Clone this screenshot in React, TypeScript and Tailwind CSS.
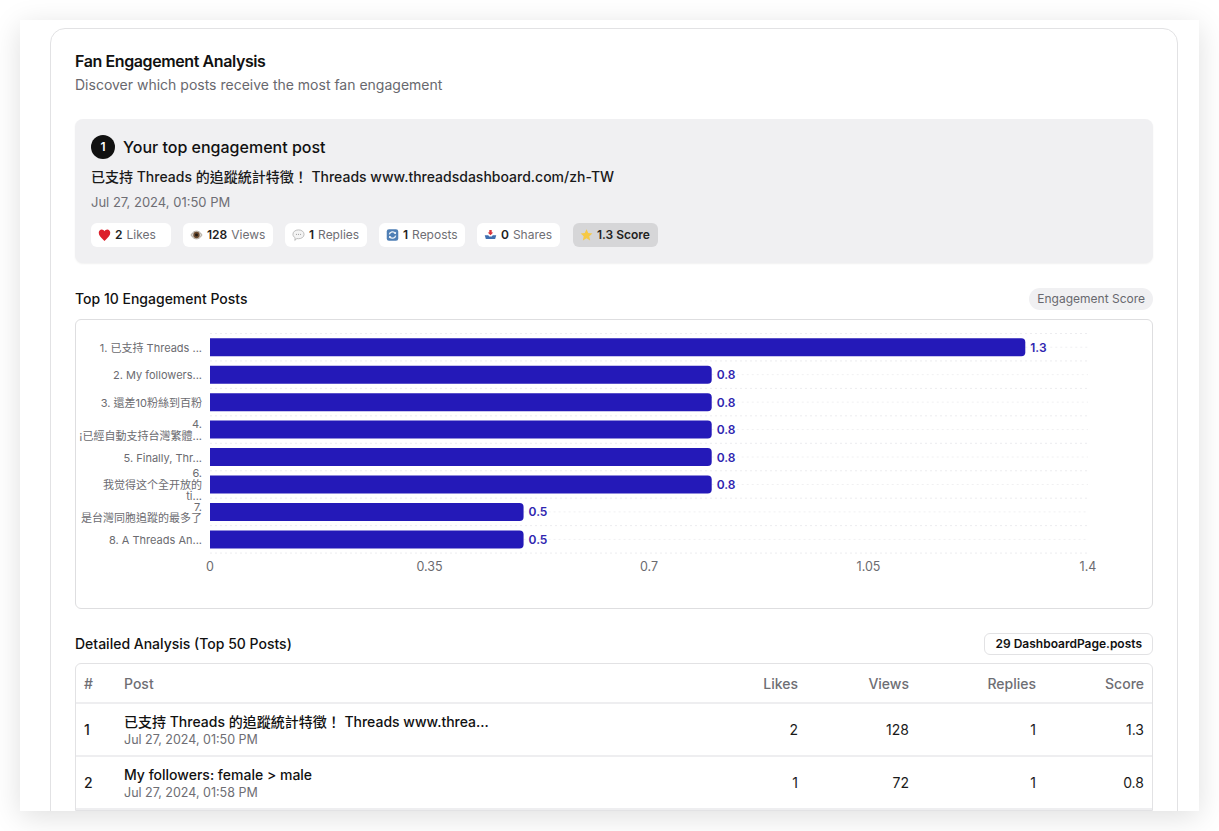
const font = { fontFamily: '"Inter", "Noto Sans CJK TC", sans-serif' };

const Heart = () => (
  <svg width="13" height="14" viewBox="0 0 14 14" className="shrink-0">
    <path d="M7 13.4 C3 9.6 0.8 7.5 0.8 4.6 C0.8 2.5 2.3 1 4 1 C5.3 1 6.4 1.8 7 3 C7.6 1.8 8.7 1 10 1 C11.7 1 13.2 2.5 13.2 4.6 C13.2 7.5 11 9.6 7 13.4 Z" fill="#dc1f2b" />
  </svg>
);

const Eye = () => (
  <svg width="13" height="14" viewBox="0 0 14 14" className="shrink-0">
    <path d="M1 7 C3 3.6 5 2.8 7 2.8 C9 2.8 11 3.6 13 7 C11 10.4 9 11.2 7 11.2 C5 11.2 3 10.4 1 7 Z" fill="#d9d5cf" stroke="#8a8278" strokeWidth="0.6" />
    <circle cx="7" cy="7" r="3.4" fill="#6b4a2e" />
    <circle cx="7" cy="7" r="1.6" fill="#1f1a16" />
  </svg>
);

const Bubble = () => (
  <svg width="13" height="14" viewBox="0 0 14 14" className="shrink-0">
    <path d="M7 1.5 C10.6 1.5 13 3.6 13 6.3 C13 9 10.6 11 7 11 C6.4 11 5.8 10.9 5.3 10.8 L3 12.8 L3.4 10 C1.9 9.1 1 7.8 1 6.3 C1 3.6 3.4 1.5 7 1.5 Z" fill="#f4f4f4" stroke="#a8a8a8" strokeWidth="0.8" />
    <circle cx="4.8" cy="6.3" r="0.6" fill="#999" />
    <circle cx="7" cy="6.3" r="0.6" fill="#999" />
    <circle cx="9.2" cy="6.3" r="0.6" fill="#999" />
  </svg>
);

const Repost = () => (
  <svg width="13" height="14" viewBox="0 0 14 14" className="shrink-0">
    <rect x="0.8" y="0.8" width="12.4" height="12.4" rx="2.4" fill="#4f7fb5" />
    <path d="M3.6 6.4 A3.5 3.5 0 0 1 10 5.2 M10.4 7.6 A3.5 3.5 0 0 1 4 8.8" fill="none" stroke="#eef3f8" strokeWidth="1.4" />
    <path d="M10.9 3.4 L10.7 6.2 L8.2 5.2 Z M3.1 10.6 L3.3 7.8 L5.8 8.8 Z" fill="#eef3f8" />
  </svg>
);

const Tray = () => (
  <svg width="13" height="14" viewBox="0 0 14 14" className="shrink-0">
    <path d="M0.8 7.4 H4.6 L5.6 8.6 H8.4 L9.4 7.4 H13.2 L12 11.4 H2 Z" fill="#3f6fb0" />
    <path d="M5.7 1.5 H8.3 V4.2 H10 L7 7.2 L4 4.2 H5.7 Z" fill="#d8343c" />
  </svg>
);

const Star = () => (
  <svg width="13" height="14" viewBox="0 0 14 14" className="shrink-0">
    <path d="M7 0.8 L8.9 4.9 L13.3 5.4 L10 8.4 L10.9 12.9 L7 10.6 L3.1 12.9 L4 8.4 L0.7 5.4 L5.1 4.9 Z" fill="#f6c945" />
  </svg>
);

const stats = [
  { icon: <Heart />, value: "2", label: "Likes", width: "w-[80px]" },
  { icon: <Eye />, value: "128", label: "Views", width: "w-[90px]" },
  { icon: <Bubble />, value: "1", label: "Replies", width: "w-[82px]" },
  { icon: <Repost />, value: "1", label: "Reposts", width: "w-[86px]" },
  { icon: <Tray />, value: "0", label: "Shares", width: "w-[83px]" },
];

const bars = [
  { lines: ["1. 已支持 Threads ..."], value: 1.3 },
  { lines: ["2. My followers..."], value: 0.8 },
  { lines: ["3. 還差10粉絲到百粉"], value: 0.8 },
  { lines: ["4.", "¡已經自動支持台灣繁體..."], value: 0.8 },
  { lines: ["5. Finally, Thr..."], value: 0.8 },
  { lines: ["6.", "我觉得这个全开放的", "ti..."], value: 0.8 },
  { lines: ["7.", "是台灣同胞追蹤的最多了"], value: 0.5 },
  { lines: ["8. A Threads An..."], value: 0.5 },
];

const ticks = [0, 0.35, 0.7, 1.05, 1.4];

// chart coords are relative to the inside of the bordered box
const plotLeft = 134;
const plotWidth = 878;
const rowTop = 13.5;
const rowHeight = 27.45;

const Chart = () => (
  <svg width="1076" height="288" viewBox="0 0 1076 288" className="block" style={font}>
    {Array.from({ length: 9 }).map((_, i) => (
      <line key={i} x1={plotLeft} x2={plotLeft + plotWidth} y1={rowTop + i * rowHeight} y2={rowTop + i * rowHeight} stroke="#ececef" strokeDasharray="2 3" />
    ))}
    {bars.map((b, i) => {
      const cy = rowTop + (i + 0.5) * rowHeight;
      const w = (b.value / 1.4) * plotWidth;
      const lineTop = cy - ((b.lines.length - 1) * 11.5) / 2;
      return (
        <g key={i}>
          <line x1={plotLeft + w} x2={plotLeft + plotWidth} y1={cy} y2={cy} stroke="#f0f0f2" strokeDasharray="2 3" />
          <path d={`M${plotLeft} ${cy - 9} H${plotLeft + w - 4} a4 4 0 0 1 4 4 V${cy + 5} a4 4 0 0 1 -4 4 H${plotLeft} Z`} fill="#2419b8" />
          <text x={plotLeft + w + 5} y={cy + 4.5} fontSize="12" fontWeight="600" fill="#2f25b0">{b.value}</text>
          {b.lines.map((l, j) => (
            <text key={j} x={plotLeft - 8} y={lineTop + j * 11.5 + 4.5} fontSize="11" textAnchor="end" fill="#6b6b70">{l}</text>
          ))}
        </g>
      );
    })}
    {ticks.map((t) => (
      <text key={t} x={plotLeft + (t / 1.4) * plotWidth} y={251} fontSize="12.5" textAnchor="middle" fill="#6b6b70">{t}</text>
    ))}
  </svg>
);

const rows = [
  { n: 1, title: "已支持 Threads 的追蹤統計特徵！ Threads www.threa...", date: "Jul 27, 2024, 01:50 PM", likes: 2, views: 128, replies: 1, score: 1.3 },
  { n: 2, title: "My followers: female > male", date: "Jul 27, 2024, 01:58 PM", likes: 1, views: 72, replies: 1, score: 0.8 },
];

export default function App() {
  return (
    <div className="h-[831px] overflow-hidden bg-white pt-[20px]" style={font}>
      <div className="mx-[20px] h-[791px] overflow-hidden bg-white pt-[8px] pl-[30px] pr-[21px] shadow-[0_6px_28px_rgba(0,0,0,0.13)]">
        <div className="rounded-t-[15px] border border-[#e2e2e4] px-6 pt-[22px] pb-6 h-[900px]">
          <h1 className="text-[16px] leading-[20px] font-semibold text-[#111] tracking-[-0.4px]">Fan Engagement Analysis</h1>
          <p className="mt-[4px] text-[14px] leading-[20px] text-[#68686e]">Discover which posts receive the most fan engagement</p>

          <div className="mt-[24px] h-[144px] rounded-lg bg-[#f0f0f2] px-4 pt-4 shadow-[0_1px_2px_rgba(0,0,0,0.06)]">
            <div className="flex items-center gap-2">
              <span className="flex h-6 w-6 items-center justify-center rounded-full bg-[#111] text-[12px] font-semibold text-white">1</span>
              <span className="text-[16px] leading-6 font-medium text-[#111]">Your top engagement post</span>
            </div>
            <p className="mt-[7px] text-[14px] leading-[22px] font-medium text-[#1a1a1a]">已支持 Threads 的追蹤統計特徵！ Threads www.threadsdashboard.com/zh-TW</p>
            <p className="mt-[4px] text-[13px] leading-[20px] text-[#6e6e74]">Jul 27, 2024, 01:50 PM</p>
            <div className="mt-[11px] flex gap-3">
              {stats.map((s) => (
                <div key={s.label} className={`flex h-6 items-center gap-[4px] whitespace-nowrap rounded-md bg-white px-[7px] text-[12px] ${s.width}`}>
                  {s.icon}
                  <span className="font-semibold text-[#222]">{s.value}</span>
                  <span className="text-[#6e6e74]">{s.label}</span>
                </div>
              ))}
              <div className="ml-px flex h-6 w-[85px] items-center gap-[4px] whitespace-nowrap rounded-md bg-[#d6d6d8] px-[7px] text-[12px] font-semibold text-[#222]">
                <Star />
                <span>1.3 Score</span>
              </div>
            </div>
          </div>

          <div className="mt-[25px] flex h-[22px] items-center justify-between">
            <h2 className="pb-[2px] text-[14px] font-medium text-[#111]">Top 10 Engagement Posts</h2>
            <span className="flex h-[22px] items-center rounded-full bg-[#f0f0f2] px-2 text-[12px] text-[#68686e]">Engagement Score</span>
          </div>

          <div className="mt-[9px] h-[290px] rounded-md border border-[#dedee0]">
            <Chart />
          </div>

          <div className="mt-[24px] flex h-[22px] items-center justify-between">
            <h2 className="pb-[2px] text-[14px] font-medium text-[#111]">Detailed Analysis (Top 50 Posts)</h2>
            <span className="flex h-[22px] items-center rounded-md border border-[#e2e2e4] px-[10px] text-[12px] font-semibold text-[#111]">29 DashboardPage.posts</span>
          </div>

          <div className="mt-[8px] rounded-t-md border border-[#e2e2e4]">
            <div className="grid h-[40px] grid-cols-[40px_1fr_80px_111px_127px_108px] items-center border-b-2 border-[#eeeef0] px-2 text-[14px] font-medium text-[#6e6e74]">
              <span>#</span>
              <span>Post</span>
              <span className="text-right">Likes</span>
              <span className="text-right">Views</span>
              <span className="text-right">Replies</span>
              <span className="text-right">Score</span>
            </div>
            {rows.map((r) => (
              <div key={r.n} className="grid h-[53px] grid-cols-[40px_1fr_80px_111px_127px_108px] items-center border-b-2 border-[#eeeef0] px-2 text-[14px] text-[#1a1a1a]">
                <span className="font-medium">{r.n}</span>
                <div className="pt-[1px]">
                  <div className="text-[14px] leading-[18px] font-medium text-[#111]">{r.title}</div>
                  <div className="text-[12.5px] leading-[17px] text-[#6e6e74]">{r.date}</div>
                </div>
                <span className="text-right">{r.likes}</span>
                <span className="text-right">{r.views}</span>
                <span className="text-right">{r.replies}</span>
                <span className="text-right">{r.score}</span>
              </div>
            ))}
          </div>
        </div>
      </div>
    </div>
  );
}
